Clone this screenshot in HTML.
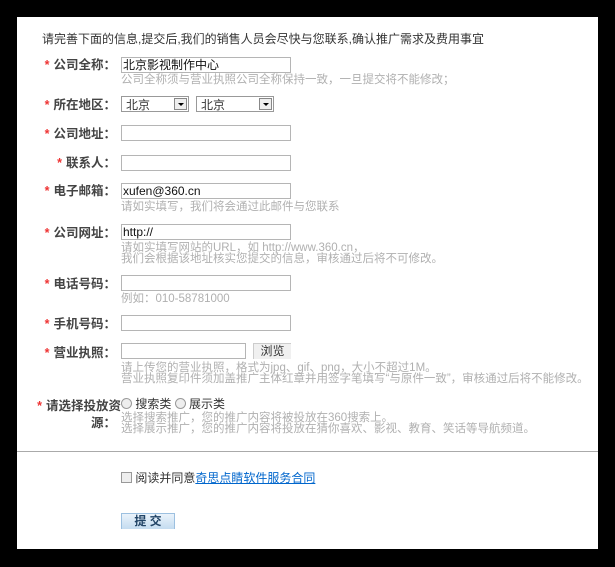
<!DOCTYPE html>
<html><head><meta charset="utf-8"><style>
body{margin:0;width:615px;height:567px;background:#000;overflow:hidden;font-family:"Liberation Sans","Noto Sans CJK SC",sans-serif;font-size:12px;color:#333}
#p{position:absolute;left:17px;top:17px;width:581px;height:532px;background:#fff}
.a{position:absolute;white-space:nowrap;line-height:14px}
.l{position:absolute;right:499px;width:100px;text-align:right;font-weight:bold;color:#444;white-space:nowrap;line-height:14px;font-size:12.5px}
.l b{color:#e33;font-weight:bold;margin-right:4px}
.i{position:absolute;left:121px;width:167px;height:14px;border:1px solid #b5b5b5;background:#fff;font-size:12px;line-height:14px;color:#111;padding-left:1px;box-sizing:content-box}
.h{position:absolute;left:121px;color:#b0b0b0;line-height:11px;white-space:nowrap;font-size:11.5px}
.s{position:absolute;height:16px;border:1px solid #999;background:#fff;line-height:16px;padding-left:4px;box-sizing:border-box}
.s i{position:absolute;right:1px;top:1px;width:13px;height:12px;border:1px solid #888;background:#eee;box-sizing:border-box}
.s i:after{content:"";position:absolute;left:3px;top:4px;border:3px solid transparent;border-top:3px solid #000}
</style></head><body>
<div id="p"></div>
<div class="a" style="left:42px;top:32px;color:#333">请完善下面的信息,提交后,我们的销售人员会尽快与您联系,确认推广需求及费用事宜</div>

<div class="l" style="top:58px"><b>*</b>公司全称：</div>
<div class="i" style="top:57px">北京影视制作中心</div>
<div class="h" style="top:75px">公司全称须与营业执照公司全称保持一致，一旦提交将不能修改；</div>

<div class="l" style="top:98px"><b>*</b>所在地区：</div>
<div class="s" style="left:121px;top:96px;width:68px">北京<i></i></div>
<div class="s" style="left:196px;top:96px;width:78px">北京<i></i></div>

<div class="l" style="top:127px"><b>*</b>公司地址：</div>
<div class="i" style="top:125px"></div>

<div class="l" style="top:156px"><b>*</b>联系人：</div>
<div class="i" style="top:155px"></div>

<div class="l" style="top:184px"><b>*</b>电子邮箱：</div>
<div class="i" style="top:183px">xufen@360.cn</div>
<div class="h" style="top:202px">请如实填写，我们将会通过此邮件与您联系</div>

<div class="l" style="top:226px"><b>*</b>公司网址：</div>
<div class="i" style="top:224px">http://</div>
<div class="h" style="top:243px">请如实填写网站的URL，如 http://www.360.cn，</div>
<div class="h" style="top:254px">我们会根据该地址核实您提交的信息，审核通过后将不可修改。</div>

<div class="l" style="top:277px"><b>*</b>电话号码：</div>
<div class="i" style="top:275px"></div>
<div class="h" style="top:294px">例如：010-58781000</div>

<div class="l" style="top:317px"><b>*</b>手机号码：</div>
<div class="i" style="top:315px"></div>

<div class="l" style="top:346px"><b>*</b>营业执照：</div>
<div class="i" style="top:343px;width:122px"></div>
<div class="a" style="left:253px;top:343px;width:37px;height:15px;background:#f0f0f0;border-left:1px solid #ccc;border-top:1px solid #ccc;text-align:center">浏览</div>
<div class="h" style="top:363px">请上传您的营业执照，格式为jpg、gif、png，大小不超过1M。</div>
<div class="h" style="top:374px">营业执照复印件须加盖推广主体红章并用签字笔填写“与原件一致”，审核通过后将不能修改。</div>

<div class="l" style="top:399px;right:494px"><b>*</b>请选择投放资</div>
<div class="l" style="top:416px">源：</div>
<div class="a" style="left:121px;top:397px"><span style="display:inline-block;width:9px;height:9px;border:1px solid #999;border-radius:50%;background:#eee;vertical-align:-1px"></span> 搜索类 <span style="display:inline-block;width:9px;height:9px;border:1px solid #999;border-radius:50%;background:#eee;vertical-align:-1px"></span> 展示类</div>
<div class="h" style="top:413px">选择搜索推广，您的推广内容将被投放在360搜索上。</div>
<div class="h" style="top:424px">选择展示推广，您的推广内容将投放在猜你喜欢、影视、教育、笑话等导航频道。</div>

<div class="a" style="left:17px;top:451px;width:581px;height:1px;background:#aaa"></div>

<div class="a" style="left:121px;top:471px"><span style="display:inline-block;width:9px;height:9px;border:1px solid #999;background:#eee;vertical-align:-1px"></span> 阅读并同意<span style="color:#06c;text-decoration:underline">奇思点睛软件服务合同</span></div>

<div class="a" style="left:121px;top:513px;width:54px;height:16px;background:linear-gradient(#eaf3fb,#c4dcf0);border:1px solid #9cc0e0;border-bottom:none;box-sizing:border-box;text-align:center;font-weight:bold;color:#246;line-height:15px">提 交</div>
</body></html>
